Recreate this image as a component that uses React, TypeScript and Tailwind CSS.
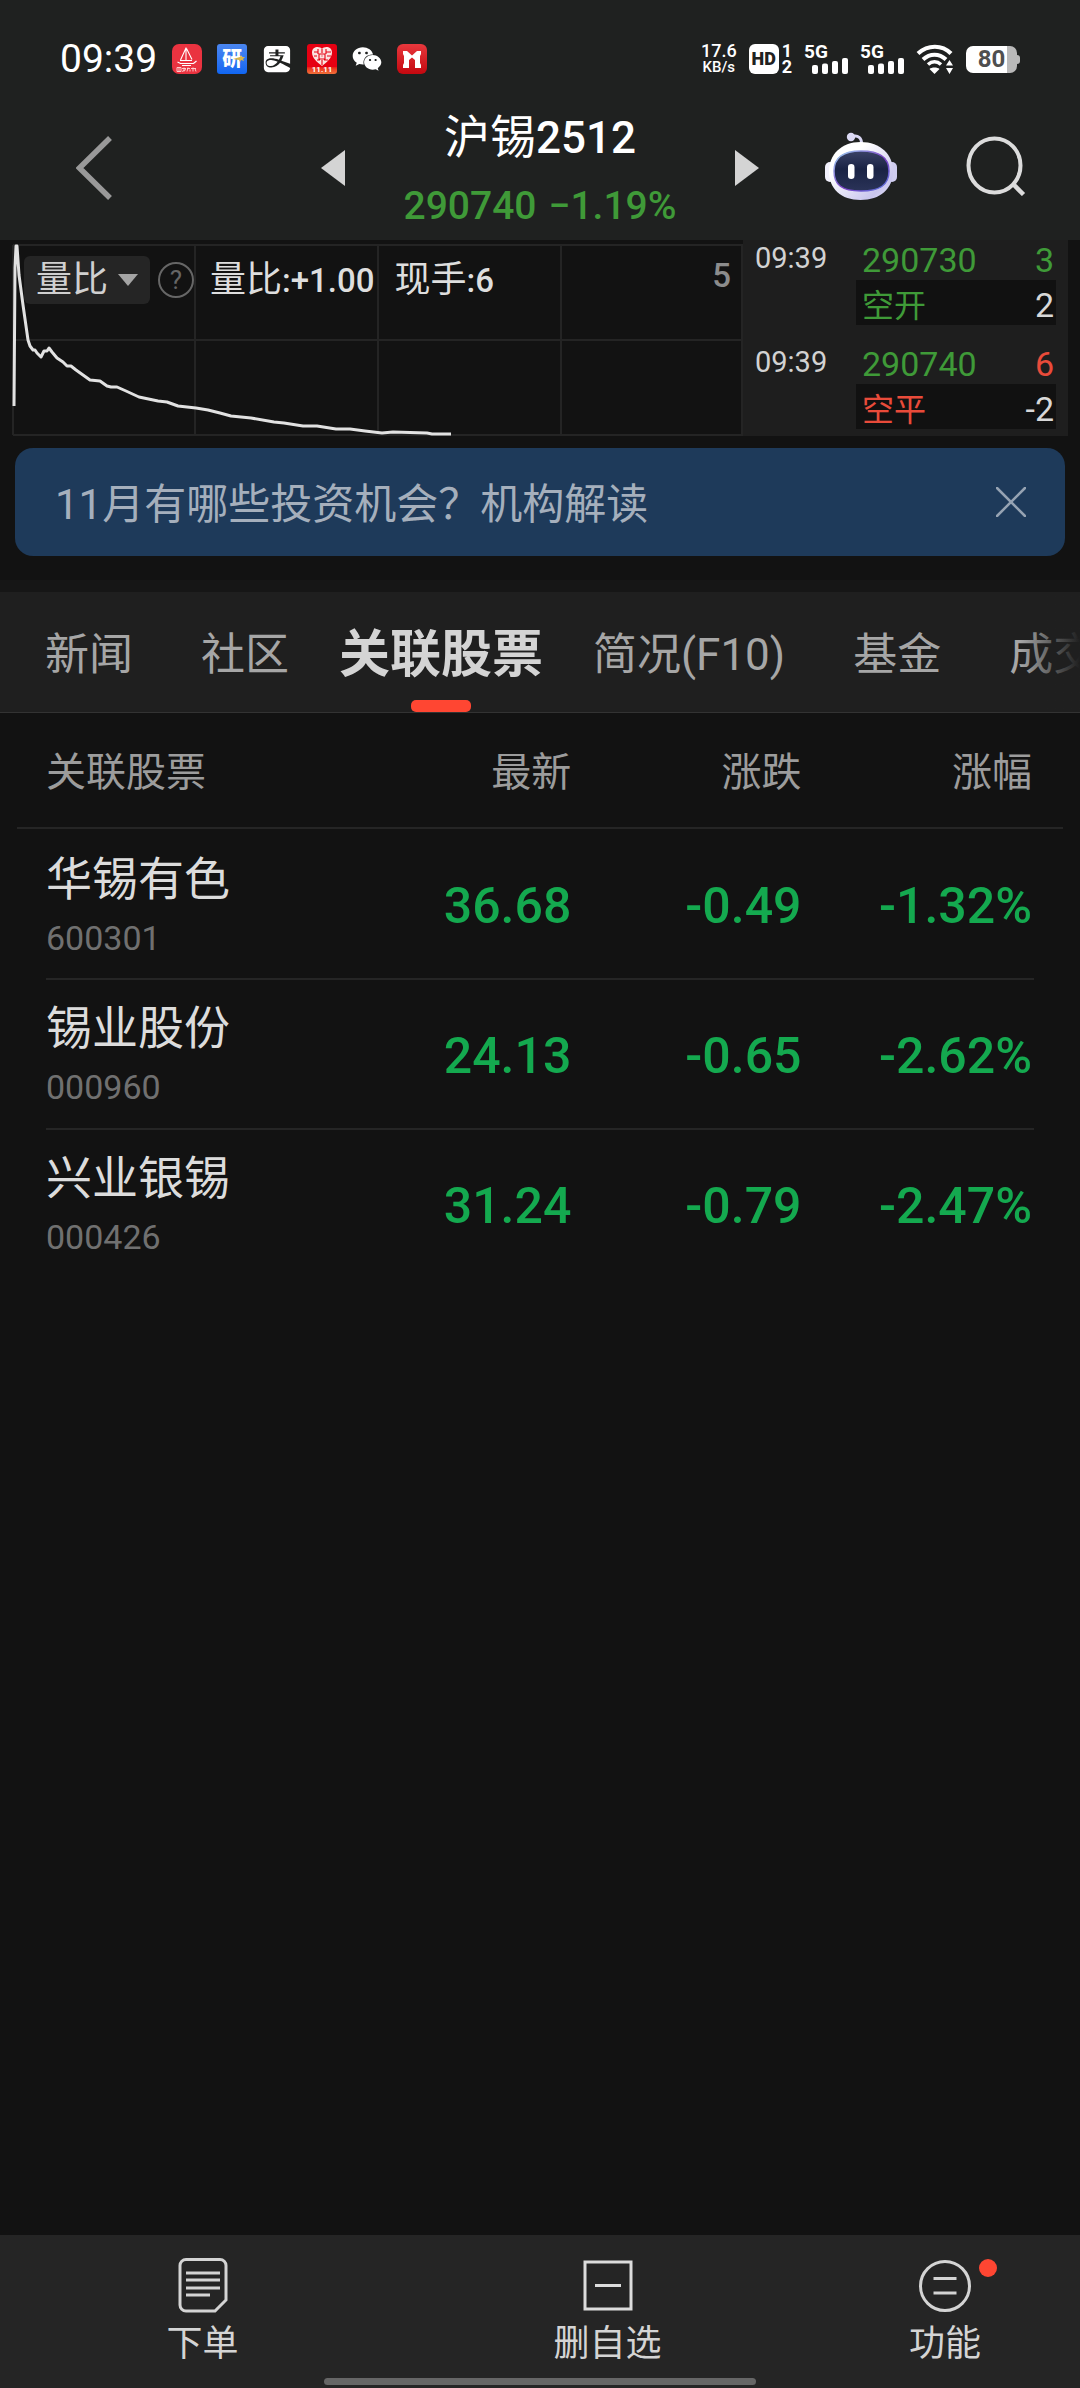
import React from "react";
import { FaAlipay, FaWeixin } from "react-icons/fa";

const GREEN = "text-[#3f9a38]";
const RED = "text-[#e94b3a]";

function BoatAppIcon() {
  return (
    <svg className="size-[30px]" viewBox="0 0 30 30" fill="none" aria-hidden="true">
      <rect width="30" height="30" rx="7" fill="#ea3340" />
      <path d="M14 3.500V16M14 4L8.500 16M14.500 4.500L20 15.500M8 16.500h12" stroke="#fff" strokeWidth="1.100" />
      <path d="M5.500 18l3 1.500h13L24.500 17M10 21.500h9" stroke="#fff" strokeWidth="1.200" />
      <path d="M5 23.500h4v4H5zM7 23.500v4M10 24.500h4M12 23.500v4M10 27.500l4-2M15 24.500h3M16 23.500l-1 4M18 25.500v2M19 24.500h5M21 23.500v4M23 24.500l1 3" stroke="#ffd9d9" strokeWidth="0.900" />
    </svg>
  );
}

function ResearchAppIcon() {
  return (
    <span className="relative flex size-[30px] items-center justify-center rounded-[3px] bg-linear-to-b from-[#4a86f0] to-[#0f66f2] text-[20px] leading-none font-black text-white">
      研
      <svg className="absolute right-0.5 bottom-3 h-[7px] w-3" viewBox="0 0 12 7" aria-hidden="true">
        <path d="M0 4l7-2 1-2 1 2h3l-2 2 1 2-3-1-1 2-1-2z" fill="#d9b54a" />
      </svg>
    </span>
  );
}

function HeartAppIcon() {
  return (
    <span className="relative flex size-[30px] items-end justify-center overflow-hidden rounded-[3px] bg-linear-to-b from-[#e60012] from-75% to-[#f0703a] text-[8px] leading-[9px] font-bold text-white">
      <svg className="absolute top-0.5 left-1 h-[21px] w-[22px]" viewBox="0 0 22 21" aria-hidden="true">
        <path d="M11 3C9 0 1 0 1 6.500 1 12 6 16 11 20c5-4 10-8 10-13.500C21 0 13 0 11 3z" fill="#fbe3e0" />
        <path d="M11 3v4M7 3v5M15 3v5M3 6h4M15 6h5M8 8h6v5H8zM3 10h3M16 10h4M6 14h3M13 14h4M11 14v5M10.500 10h1" stroke="#e60012" strokeWidth="1.100" fill="none" />
      </svg>
      11.11
    </span>
  );
}

function GateAppIcon() {
  return (
    <svg className="size-[30px]" viewBox="0 0 30 30" aria-hidden="true">
      <defs>
        <linearGradient id="gate" x1="0" y1="0" x2="0" y2="1">
          <stop offset="0" stopColor="#e8383d" />
          <stop offset="1" stopColor="#c4080f" />
        </linearGradient>
      </defs>
      <rect width="30" height="30" rx="6" fill="url(#gate)" />
      <path d="M6 7h4l5 4.500L20 7h4v3l-1 2v7l1 2v3h-6v-8l-3-2.500-3 2.500v8H6v-3l1-2v-7l-1-2z" fill="#fff" />
    </svg>
  );
}

function Signal() {
  return (
    <span className="relative block h-[30px] w-11 text-[19px] leading-[15px] font-bold">
      5G
      <svg className="absolute right-0 bottom-0 h-4 w-9" viewBox="0 0 36 16" fill="#fff" aria-hidden="true">
        <rect x="0" y="7" width="6" height="9" rx="2" />
        <rect x="10" y="5.500" width="6" height="10.500" rx="2" />
        <rect x="20" y="3" width="6" height="13" rx="2" />
        <rect x="30" y="0" width="6" height="16" rx="2" />
      </svg>
    </span>
  );
}

function Wifi() {
  return (
    <svg className="h-[30px] w-[38px]" viewBox="0 0 38 30" fill="none" aria-hidden="true">
      <path d="M2 9.500C12 .5 26 .5 35 9.500" stroke="#fff" strokeWidth="4.200" />
      <path d="M7 15.500C14 9 23 9 30 15.500" stroke="#fff" strokeWidth="4" />
      <path d="M12 20.500c4-3.500 9-3.500 13 0" stroke="#fff" strokeWidth="3.600" />
      <path d="M13.500 25c2-2 8-2 10 0L18.500 30z" fill="#fff" />
      <path d="M30 21.500h7L33.500 16zM30 24h7l-3.500 6z" fill="#fff" />
    </svg>
  );
}

function StatusBar() {
  return (
    <div className="flex h-[100px] items-center justify-between pt-[18px] pr-[60px] pl-[60px] text-white">
      <div className="flex items-center gap-[15px]">
        <span className="text-[39px] leading-[40px]">09:39</span>
        <BoatAppIcon />
        <ResearchAppIcon />
        <FaAlipay className="size-[30px]" />
        <HeartAppIcon />
        <FaWeixin className="size-[30px]" />
        <GateAppIcon />
      </div>
      <div className="flex items-center gap-3">
        <span className="flex flex-col items-center text-[18px] leading-4 font-medium">
          <span>17.6</span>
          <span className="text-[15px]">KB/s</span>
        </span>
        <span className="flex items-center gap-[3px]">
          <span className="flex size-[30px] items-center justify-center rounded-md bg-white text-[18px] leading-none font-black text-[#1f2120]">HD</span>
          <span className="flex flex-col items-center text-[18px] leading-4 font-bold">
            <span>1</span>
            <span>2</span>
          </span>
        </span>
        <Signal />
        <Signal />
        <Wifi />
        <span className="flex items-center">
          <span className="flex h-[27px] w-[51px] items-center justify-center rounded-[7px] bg-linear-to-r from-white from-80% to-[#b9b9b9] to-80% text-[24px] leading-none font-bold text-[#4f4f4f]">80</span>
          <span className="h-[9px] w-[3px] rounded-r-sm bg-[#b9b9b9]" />
        </span>
      </div>
    </div>
  );
}

function RobotIcon() {
  return (
    <svg className="h-[68px] w-[72px]" viewBox="0 0 72 68" fill="none" aria-hidden="true">
      <defs>
        <linearGradient id="shell" x1="0" y1="0" x2="1" y2="1">
          <stop offset="0.300" stopColor="#ffffff" />
          <stop offset="0.800" stopColor="#c9c6ee" />
          <stop offset="1" stopColor="#e9e8fa" />
        </linearGradient>
        <linearGradient id="rim" x1="0" y1="0" x2="1" y2="1">
          <stop offset="0" stopColor="#9fd8f4" />
          <stop offset="0.550" stopColor="#7b3fc4" />
          <stop offset="1" stopColor="#5a7be0" />
        </linearGradient>
        <linearGradient id="visor" x1="0" y1="0" x2="0" y2="1">
          <stop offset="0" stopColor="#3a4266" />
          <stop offset="0.450" stopColor="#1a2344" />
          <stop offset="1" stopColor="#2a3358" />
        </linearGradient>
      </defs>
      <path d="M27 4.500c6-1.500 10 1 9.500 8" stroke="#d9d7f3" strokeWidth="3" />
      <circle cx="26" cy="5" r="4.200" fill="#dcdaf5" />
      <rect x="0" y="30" width="10" height="20" rx="5" fill="#f1f0fc" />
      <rect x="62" y="30" width="10" height="20" rx="5" fill="#cfcdf0" />
      <path d="M35.500 10C56 10 68 23 68 39c0 18-13 29-32.500 29S4 57 4 39C4 23 16 10 35.500 10z" fill="url(#shell)" />
      <path d="M36 19c18 0 28 6 28 20 0 14-9 20-28 20S9 53 9 39c0-14 9-20 27-20z" fill="url(#visor)" stroke="url(#rim)" strokeWidth="1.500" />
      <rect x="23" y="32" width="6.500" height="15" rx="3.200" fill="#fff" />
      <rect x="42" y="32" width="6.500" height="15" rx="3.200" fill="#fff" />
    </svg>
  );
}

function Header() {
  return (
    <div className="grid h-[140px] grid-cols-[5fr_8fr_5fr] items-center">
      <div className="flex pb-1 pl-[76px]">
        <button type="button" aria-label="返回">
          <svg className="h-16 w-9" viewBox="0 0 36 64" fill="none" aria-hidden="true">
            <path d="M34 2L3.500 32 34 62" stroke="#999" strokeWidth="5.500" />
          </svg>
        </button>
      </div>
      <div className="flex items-center justify-between px-[21px]">
        <button type="button" aria-label="上一个" className="pb-1">
          <svg className="h-9 w-6" viewBox="0 0 24 36" aria-hidden="true">
            <path d="M24 0v36L0 18z" fill="#d4d4d4" />
          </svg>
        </button>
        <div className="flex flex-col items-center pt-0.5 whitespace-nowrap">
          <h1 className="text-[46px] leading-[68px] font-normal text-white">
            沪锡<span className="text-[44px] font-medium">2512</span>
          </h1>
          <p className={`flex gap-3 text-[39px] leading-[68px] font-medium ${GREEN}`}>
            <span>290740</span>
            <span>−1.19%</span>
          </p>
        </div>
        <button type="button" aria-label="下一个" className="pb-1">
          <svg className="h-9 w-6" viewBox="0 0 24 36" aria-hidden="true">
            <path d="M0 0v36l24-18z" fill="#d4d4d4" />
          </svg>
        </button>
      </div>
      <div className="flex items-center justify-between pr-[54px] pb-2 pl-[45px]">
        <button type="button" aria-label="智能助手">
          <RobotIcon />
        </button>
        <button type="button" aria-label="搜索">
          <svg className="size-[60px]" viewBox="0 0 60 60" fill="none" stroke="#dcdcdc" aria-hidden="true">
            <ellipse cx="28.500" cy="29.500" rx="26" ry="27" strokeWidth="4" />
            <path d="M47 48l10.500 10.500" strokeWidth="4.500" />
          </svg>
        </button>
      </div>
    </div>
  );
}

const CURVE =
  "14,166 15,28 16,6 17,6 19,35 23,65 28,100 30,106 33,110 35,110 37,113 41,117 44,111 47,111 49,108 52,112 57,118 63,122 67,126 71,126 76,130 83,135 90,140 100,141 107,146 111,147 117,147 126,151 139,157 158,161 167,162 178,166 196,168 208,170 220,173 231,176 251,178 274,182 284,183 303,186 317,186 336,189 350,189 365,191 382,193 393,192 427,193 432,194 451,194";

function VolumeChart() {
  return (
    <div className="relative h-[196px] flex-1">
      <svg className="h-full w-full" viewBox="0 0 743 196" preserveAspectRatio="none" fill="none" aria-hidden="true">
        <path d="M13 5H743M13 100H743M13 195H743M13 5V195M195 5V195M378 5V195M561 5V195M742 5V195" stroke="#242424" strokeWidth="2" />
        <polyline points={CURVE} stroke="#e2e2e2" strokeWidth="3" strokeLinejoin="round" />
      </svg>
      <div className="absolute inset-x-0 top-4 flex h-12 items-center pr-3 pl-6 text-[33px] text-[#dedede]">
        <button type="button" className="flex h-12 items-center gap-2.5 rounded-md bg-[#252525] px-3 text-[36px] leading-[48px] text-[#d0d0d0]">
          量比
          <svg className="h-3 w-5" viewBox="0 0 20 12" aria-hidden="true">
            <path d="M0 0h20l-10 12z" fill="#a4a4a4" />
          </svg>
        </button>
        <button type="button" aria-label="说明" className="ml-2 flex size-9 shrink-0 items-center justify-center rounded-full border-2 border-[#666] text-[26px] leading-none text-[#666]">
          ?
        </button>
        <span className="ml-4 leading-[48px] font-medium whitespace-nowrap">
          <span className="text-[36px] font-normal">量比</span>:+1.00
        </span>
        <span className="ml-5 leading-[48px] font-medium whitespace-nowrap">
          <span className="text-[36px] font-normal">现手</span>:6
        </span>
        <span className="ml-auto pb-2 leading-10 font-medium text-[#8c8c8c]">5</span>
      </div>
    </div>
  );
}

const TRADES = [
  { time: "09:39", price: "290730", volume: "3", volumeColor: GREEN, kind: "空开", kindColor: GREEN, change: "2" },
  { time: "09:39", price: "290740", volume: "6", volumeColor: RED, kind: "空平", kindColor: RED, change: "-2" },
];

function TradeTape() {
  return (
    <ul className="mr-3 flex w-[325px] flex-col gap-[19px] bg-[#1e1e1e]">
      {TRADES.map((t) => (
        <li key={t.price} className="flex h-[85px] gap-[30px] pr-3 pl-3">
          <time className="w-[71px] text-[29px] leading-9 text-[#d2d2d2]">{t.time}</time>
          <div className="flex-1 text-[34px]">
            <div className="flex h-10 items-center justify-between px-1.5 pr-0.5">
              <span className={GREEN}>{t.price}</span>
              <span className={t.volumeColor}>{t.volume}</span>
            </div>
            <div className="flex h-[45px] items-center justify-between bg-[#111] px-1.5 pt-1.5 pr-0.5">
              <span className={`text-[32px] ${t.kindColor}`}>{t.kind}</span>
              <span className="text-[#d8d8d8]">{t.change}</span>
            </div>
          </div>
        </li>
      ))}
    </ul>
  );
}

function Banner() {
  return (
    <div className="mx-[15px] mt-3 flex h-[108px] items-center justify-between rounded-[18px] bg-[#1e3a5a] pr-[39px] pl-10">
      <a href="#report" className="pt-1 text-[42px] text-[#a5afbc]">
        11月有哪些投资机会？机构解读
      </a>
      <button type="button" aria-label="关闭">
        <svg className="size-[30px]" viewBox="0 0 30 30" fill="none" aria-hidden="true">
          <path d="M1 1l28 28M29 1L1 29" stroke="#96a3b3" strokeWidth="2.500" strokeLinecap="round" />
        </svg>
      </button>
    </div>
  );
}

const TABS = ["新闻", "社区", "关联股票", "简况(F10)", "基金", "成交"];

function Tabs() {
  return (
    <div className="mt-6 border-t-12 border-t-[#161616]">
      <nav role="tablist" className="relative flex h-[121px] overflow-hidden border-b border-[#333] bg-[#1f1f1f] pl-[11px] whitespace-nowrap">
        {TABS.map((tab) =>
          tab === "关联股票" ? (
            <button key={tab} type="button" role="tab" aria-selected="true" className="relative flex shrink-0 items-center justify-center px-4 pt-1.5 text-[51px] font-bold text-[#d4d4d4]">
              {tab}
              <span className="absolute bottom-0 h-3 w-[60px] rounded-[5px] bg-[#ff4632]" />
            </button>
          ) : (
            <button key={tab} type="button" role="tab" aria-selected="false" className="shrink-0 px-[34px] pt-1.5 text-[44px] text-[#a6a6a6]">
              {tab}
            </button>
          ),
        )}
        <span className="pointer-events-none absolute inset-y-0 right-0 w-[60px] bg-linear-to-r from-transparent to-[#1f1f1f]" />
      </nav>
    </div>
  );
}

const STOCKS = [
  { name: "华锡有色", code: "600301", last: "36.68", change: "-0.49", percent: "-1.32%" },
  { name: "锡业股份", code: "000960", last: "24.13", change: "-0.65", percent: "-2.62%" },
  { name: "兴业银锡", code: "000426", last: "31.24", change: "-0.79", percent: "-2.47%" },
];

function StockTable() {
  return (
    <div className="flex-1 px-[17px]">
      <table className="w-full table-fixed border-collapse">
        <thead>
          <tr className="h-[115px] border-b-2 border-[#252525] text-[40px] text-[#9c9c9c] [&>th]:pt-1.5 [&>th]:font-normal">
            <th scope="col" className="w-[31%] pl-[29px] text-left">关联股票</th>
            <th scope="col" className="w-[22%] text-right">最新</th>
            <th scope="col" className="w-[22%] text-right">涨跌</th>
            <th scope="col" className="w-[25%] pr-[31px] text-right">涨幅</th>
          </tr>
        </thead>
        <tbody>
          {STOCKS.map((s) => (
            <tr
              key={s.code}
              className="relative h-[150px] text-right text-[50px] font-medium text-[#14a94f] after:absolute after:inset-x-[29px] after:-bottom-0.5 after:h-0.5 after:bg-[#252525] last:after:hidden [&>td]:pt-1.5"
            >
              <th scope="row" className="pt-2 pl-[29px] text-left font-normal">
                <div className="text-[46px] leading-[60px] text-[#dcdcdc]">{s.name}</div>
                <div className="text-[34px] leading-[58px] text-[#707070]">{s.code}</div>
              </th>
              <td>{s.last}</td>
              <td>{s.change}</td>
              <td className="pr-[31px]">{s.percent}</td>
            </tr>
          ))}
        </tbody>
      </table>
    </div>
  );
}

function BottomBar() {
  return (
    <footer className="flex h-[153px] flex-col justify-between bg-[#252525] pt-[22px] pb-[3px] text-[36px] leading-[46px] text-[#d4d4d4]">
      <nav className="grid grid-cols-[3fr_3fr_2fr]">
        <button type="button" className="flex flex-col items-center gap-2">
          <svg className="h-14 w-[50px]" viewBox="0 0 50 56" fill="none" stroke="#d4d4d4" strokeWidth="3" aria-hidden="true">
            <path d="M8 2.500h34a6 6 0 0 1 6 6V43L37 54H8a6 6 0 0 1-6-6V8.500a6 6 0 0 1 6-6z" />
            <path d="M8 16h34M8 23h34M8 31h34M8 38h24" />
          </svg>
          下单
        </button>
        <button type="button" className="flex flex-col items-center gap-2">
          <svg className="h-14 w-[50px]" viewBox="0 0 50 56" fill="none" stroke="#dcdcdc" strokeWidth="3" aria-hidden="true">
            <path d="M2 5h46v47H2zM12 28.500h26" />
          </svg>
          删自选
        </button>
        <button type="button" className="flex flex-col items-center gap-2">
          <span className="relative">
            <svg className="h-14 w-[52px]" viewBox="0 0 52 56" fill="none" stroke="#d4d4d4" strokeWidth="3" aria-hidden="true">
              <circle cx="26" cy="29" r="24.500" />
              <path d="M14.500 21.500h23M14.500 36h23" />
            </svg>
            <span className="absolute top-0.5 -right-[26px] size-[18px] rounded-full bg-[#ff4632]" />
          </span>
          功能
        </button>
      </nav>
      <span className="h-[7px] w-2/5 self-center rounded-full bg-[#666]" />
    </footer>
  );
}

export default function App() {
  return (
    <div className="flex min-h-screen flex-col bg-[#121212] font-['Roboto','Noto_Sans_CJK_SC',sans-serif]">
      <header className="bg-[#1f2120]">
        <StatusBar />
        <Header />
      </header>
      <section className="flex">
        <VolumeChart />
        <TradeTape />
      </section>
      <Banner />
      <Tabs />
      <StockTable />
      <BottomBar />
    </div>
  );
}
